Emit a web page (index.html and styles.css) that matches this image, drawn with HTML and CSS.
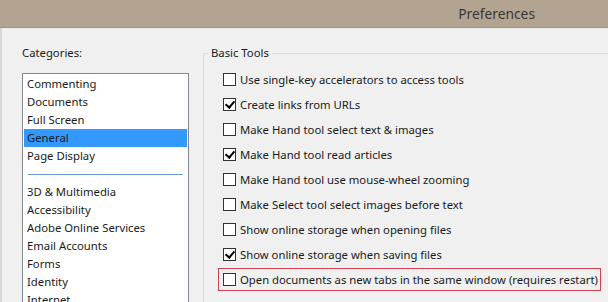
FILE: index.html
```html
<!DOCTYPE html>
<html lang="en">
<head>
    <meta charset="UTF-8">
    <title>Preferences</title>
    <link rel="stylesheet" href="styles.css">
</head>
<body>

<div class="titlebar">
    <span class="title">Preferences</span>
</div>

<div class="window">
    <!-- Categories list -->
    <div class="categories">
        <div class="label">Categories:</div>
        <div class="listbox">
            <div class="item">Commenting</div>
            <div class="item">Documents</div>
            <div class="item">Full Screen</div>
            <div class="item selected">General</div>
            <div class="item">Page Display</div>
            <div class="separator"></div>
            <div class="item">3D &amp; Multimedia</div>
            <div class="item">Accessibility</div>
            <div class="item">Adobe Online Services</div>
            <div class="item">Email Accounts</div>
            <div class="item">Forms</div>
            <div class="item">Identity</div>
            <div class="item">Internet</div>
        </div>
    </div>

    <!-- Basic Tools group -->
    <fieldset class="group">
        <legend>Basic Tools</legend>
        <div class="options">
            <div class="option"><span class="box"></span>Use single-key accelerators to access tools</div>
            <div class="option"><span class="box checked"></span>Create links from URLs</div>
            <div class="option"><span class="box"></span>Make Hand tool select text &amp; images</div>
            <div class="option"><span class="box checked"></span>Make Hand tool read articles</div>
            <div class="option"><span class="box"></span>Make Hand tool use mouse-wheel zooming</div>
            <div class="option"><span class="box"></span>Make Select tool select images before text</div>
            <div class="option"><span class="box"></span>Show online storage when opening files</div>
            <div class="option"><span class="box checked"></span>Show online storage when saving files</div>
            <div class="option"><span class="highlight"><span class="box"></span>Open documents as new tabs in the same window (requires restart)</span></div>
        </div>
    </fieldset>
</div>

</body>
</html>
```

FILE: styles.css
```css
/* Basic Reset */
* {
    margin: 0;
    padding: 0;
    box-sizing: border-box;
}

body {
    font-family: 'Noto Sans', sans-serif;
    font-size: 11.3px;
    color: #1a1a1a;
    background-color: #f0f0f0;
    width: 608px;
    height: 302px;
    overflow: hidden;
}

/* Title bar */
.titlebar {
    height: 28px;
    background-color: #b3a492;
    border-bottom: 1px solid #a29482;
    display: flex;
    justify-content: flex-end;
    align-items: center;
    padding-right: 73px;
}

.title {
    font-size: 13.8px;
    color: #3b3631;
}

/* Window body */
.window {
    display: flex;
    height: 274px;
    border-left: 2px solid #d8d8d8;
}

.categories {
    padding-left: 20px;
    width: 201px;
    flex-shrink: 0;
}

.label {
    margin-top: 17px;
    line-height: 16px;
}

.listbox {
    margin-top: 12px;
    width: 167px;
    height: 300px;
    background-color: #fff;
    border: 1px solid #828790;
    padding: 1px;
}

.item {
    height: 18px;
    line-height: 18px;
    padding-left: 3px;
    white-space: nowrap;
}

.item.selected {
    background-color: #3399ff;
}

.separator {
    height: 1px;
    margin: 9px 4px 8px 4px;
    background-color: #6a9ccb;
}

/* Group box */
.group {
    flex: 1;
    margin-top: 17px;
    border: none;
    border-top: 1px solid #dcdcdc;
    border-left: 1px solid #dcdcdc;
    padding: 0;
}

.group legend {
    margin-left: 4px;
    padding: 0 3px;
    line-height: 16px;
}

.options {
    padding: 6px 0 0 19px;
}

.option {
    height: 25px;
    display: flex;
    align-items: center;
    white-space: nowrap;
}

.box {
    width: 13px;
    height: 13px;
    border: 1px solid #333;
    background-color: #fff;
    margin-right: 4px;
    flex-shrink: 0;
    position: relative;
}

.box.checked::after {
    content: "";
    position: absolute;
    left: 3px;
    top: 0px;
    width: 4px;
    height: 7px;
    border-right: 2px solid #000;
    border-bottom: 2px solid #000;
    transform: rotate(40deg);
}

.highlight {
    display: flex;
    align-items: center;
    height: 23px;
    margin-left: -5px;
    padding: 0 2px 0 4px;
    border: 1px solid #d0424f;
}
```
